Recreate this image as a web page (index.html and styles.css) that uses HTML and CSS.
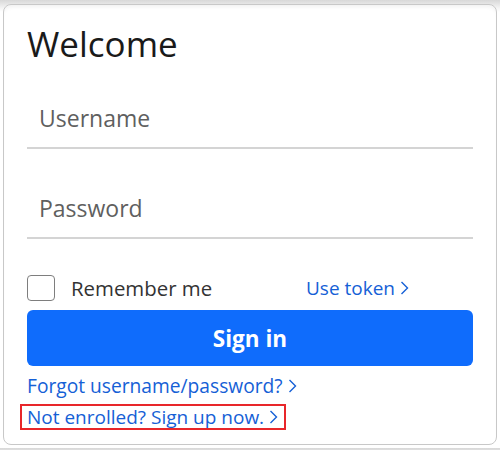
FILE: index.html
```html
<!DOCTYPE html>
<html lang="en">
<head>
    <meta charset="UTF-8">
    <title>Welcome</title>
    <link rel="stylesheet" href="styles.css">
</head>
<body>
    <div class="card">
        <h1>Welcome</h1>
        <div class="field">
            <input type="text" placeholder="Username">
        </div>
        <div class="field">
            <input type="password" placeholder="Password">
        </div>
        <div class="options">
            <label class="remember">
                <span class="box"></span>
                Remember me
            </label>
            <a href="#" class="link">Use token
                <svg class="chev" viewBox="0 0 9 15"><path d="M1.5 1.5 L7.5 7.5 L1.5 13.5"/></svg>
            </a>
        </div>
        <button>Sign in</button>
        <div class="links">
            <a href="#" class="link">Forgot username/password?
                <svg class="chev" viewBox="0 0 9 15"><path d="M1.5 1.5 L7.5 7.5 L1.5 13.5"/></svg>
            </a>
            <a href="#" class="link enroll">Not enrolled? Sign up now.
                <svg class="chev" viewBox="0 0 9 15"><path d="M1.5 1.5 L7.5 7.5 L1.5 13.5"/></svg>
            </a>
        </div>
    </div>
</body>
</html>
```

FILE: styles.css
```css
body {
    margin: 0;
    padding: 4px 3px 3px;
    background: linear-gradient(#d8d8d8, #f4f4f4 8px, #fff 12px);
    font-family: "Open Sans", Arial, sans-serif;
}
.card {
    background-color: #fff;
    border: 1px solid #c8c8c8;
    border-radius: 8px;
    height: 441px;
    box-sizing: border-box;
    padding: 17px 23px 0;
    box-shadow: inset 0 4px 4px -2px rgba(0,0,0,0.06);
}
h1 {
    margin: 0;
    font-size: 35px;
    font-weight: 400;
    color: #1a1a1a;
    line-height: 44px;
}
.field {
    margin-top: 37px;
    border-bottom: 2px solid #d4d4d4;
}
.field + .field {
    margin-top: 44px;
}
.field input {
    display: block;
    border: none;
    outline: none;
    width: 100%;
    padding: 0 12px 14px;
    box-sizing: border-box;
    font-family: inherit;
    font-size: 23px;
    line-height: 30px;
    height: 44px;
    color: #333;
}
.field input::placeholder {
    color: #5f5f5f;
}
.options {
    display: flex;
    align-items: center;
    margin-top: 34px;
    height: 30px;
}
.remember {
    display: flex;
    align-items: center;
    font-size: 20.4px;
    color: #333;
    width: 279px;
}
.box {
    width: 28px;
    height: 26px;
    box-sizing: border-box;
    border: 1.5px solid #7e7e7e;
    border-radius: 4px;
    margin-right: 16px;
}
.link {
    color: #1560d6;
    text-decoration: none;
    font-size: 19px;
    display: inline-flex;
    align-items: center;
}
.chev {
    width: 9px;
    height: 16px;
    margin-left: 5px;
    fill: none;
    stroke: #1560d6;
    stroke-width: 1.4;
}
button {
    display: block;
    width: 100%;
    height: 56px;
    margin-top: 7px;
    background-color: #0f6cfc;
    border: none;
    border-radius: 6px;
    color: #fff;
    font-family: inherit;
    font-size: 22.5px;
    font-weight: 700;
}
.links {
    display: flex;
    flex-direction: column;
    align-items: flex-start;
    margin-top: 6px;
}
.links .link {
    line-height: 28px;
    font-size: 19.2px;
}
.links .enroll {
    margin-top: 4px;
    margin-left: -7px;
    padding: 0 6px 0 5px;
    line-height: 22px;
    border: 2px solid #e8262a;
    font-size: 19px;
}
```
